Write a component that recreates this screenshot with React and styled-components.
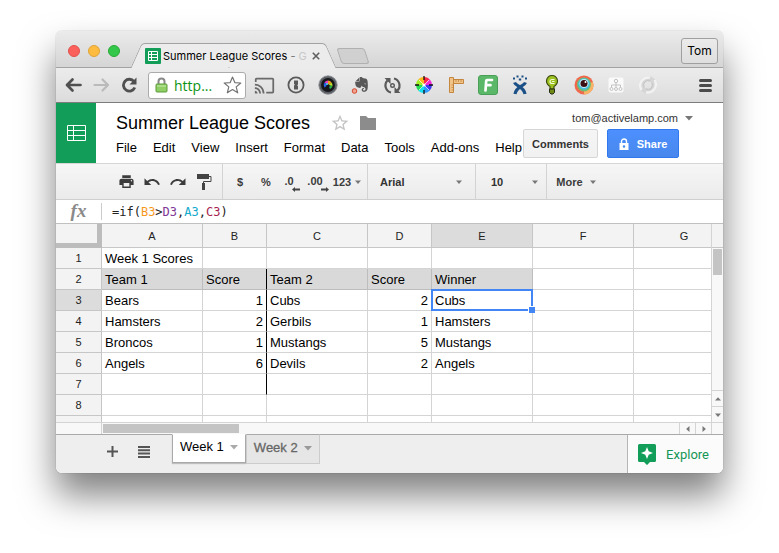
import React from "react";
import styled, { createGlobalStyle, css } from "styled-components";
import { MdCast, MdPrint, MdUndo, MdRedo, MdStarBorder } from "react-icons/md";
import { FaEvernote } from "react-icons/fa";

const GlobalStyle = createGlobalStyle`
  *, *::before, *::after { box-sizing: border-box; }
  body {
    margin: 0;
    background: #fff;
    color: #000;
    font-family: Arial, "Liberation Sans", sans-serif;
    font-size: 13px;
  }
  button, input, select { font: inherit; color: inherit; margin: 0; padding: 0; border: 0; background: none; border-radius: 0; }
  svg { display: block; flex: none; }
`;

const Desktop = styled.main`
  padding: 31px 56px 80px;
`;

const Window = styled.div`
  display: flex;
  flex-direction: column;
  border-radius: 6px;
  overflow: hidden;
  background: #fff;
`;

const WindowShadow = styled.div`
  border-radius: 6px;
  box-shadow: 0 0 1px rgba(0, 0, 0, 0.5), 0 22px 36px rgba(0, 0, 0, 0.5);
`;

/* ---------- Browser chrome ---------- */

const TabStrip = styled.header`
  display: flex;
  align-items: flex-end;
  height: 37px;
  padding: 0 5px 0 12px;
  background: linear-gradient(#ebebeb, #d5d5d5);
  border-bottom: 1px solid #a2a2a2;
`;

const Lights = styled.div`
  display: flex;
  gap: 8px;
  align-self: center;
  margin: 3px 10px 0 0;
`;

const Light = styled.button`
  width: 12px;
  height: 12px;
  border-radius: 50%;
  background: ${(p) => p.$fill};
  border: 1px solid ${(p) => p.$edge};
`;

const BrowserTab = styled.div`
  position: relative;
  z-index: 0;
  display: flex;
  align-items: center;
  height: 25px;
  width: 195px;
  margin: 0 6px -1px;
  padding: 1px 8px 0 9px;
  gap: 2px;
  font: 11px/24px Inter, sans-serif;

  &::before,
  &::after {
    content: "";
    position: absolute;
    z-index: -1;
    top: 0;
    bottom: 0;
    background: #ececec;
    border-top: 1px solid #a2a2a2;
  }
  &::before {
    left: 0;
    right: 50%;
    transform: skewX(-24deg);
    border-left: 1px solid #a2a2a2;
    border-top-left-radius: 4px;
  }
  &::after {
    left: 45%;
    right: 0;
    transform: skewX(24deg);
    border-right: 1px solid #a2a2a2;
    border-top-right-radius: 4px;
  }
`;

const TabTitle = styled.span`
  flex: 1;
  white-space: nowrap;
`;

const Faded = styled.span`
  color: ${(p) => (p.$strong ? "#c8c8c8" : "#777")};
`;

const CloseTab = styled.button`
  display: grid;
  place-items: center;
  width: 14px;
  height: 14px;
`;

const NewTab = styled.button`
  width: 28px;
  height: 16px;
  margin: 0 auto 3px 2px;
  transform: skewX(18deg);
  border: 1px solid #b0b0b0;
  border-radius: 3px;
  background: #d0d0d0;
`;

const Profile = styled.button`
  align-self: center;
  width: 37px;
  height: 26px;
  margin-top: 3px;
  border: 1px solid #a0a0a0;
  border-radius: 3px;
  background: linear-gradient(#ebebeb, #dedede);
  font: 12px Inter, sans-serif;
`;

const NavBar = styled.nav`
  display: flex;
  align-items: center;
  height: 35px;
  padding: 0 11px 0 3px;
  background: linear-gradient(#ececec, #dcdcdc);
  border-bottom: 1px solid #7c7c7c;
`;

const IconSlot = styled.button`
  display: grid;
  place-items: center;
  flex: none;
  width: ${(p) => p.$w || 28}px;
  height: 28px;
  color: ${(p) => p.$color || "#505050"};
`;

const Omnibox = styled.label`
  display: flex;
  align-items: center;
  gap: 6px;
  flex: none;
  width: 98px;
  height: 27px;
  margin: 0 2px 0 5px;
  padding: 0 3px 0 6px;
  border: 1px solid #ababab;
  border-radius: 3px;
  background: #fff;
`;

const UrlInput = styled.input`
  flex: 1;
  width: 40px;
  min-width: 0;
  color: #0b9312;
  outline: 0;
  font: 14px "Open Sans", sans-serif;
`;

const Extensions = styled.div`
  display: flex;
  margin-right: auto;
`;

/* ---------- Document header ---------- */

const DocHeader = styled.header`
  display: flex;
  height: 60px;
`;

const Brand = styled.a`
  display: grid;
  place-items: center;
  width: 40px;
  background: #129d58;
`;

const DocMain = styled.div`
  flex: 1;
  min-width: 0;
  padding: 7px 0 0 20px;
`;

const TitleRow = styled.div`
  display: flex;
  align-items: center;
  height: 26px;
`;

const DocTitle = styled.h1`
  margin: 0 20px 0 0;
  font-size: 18px;
  font-weight: 400;
  white-space: nowrap;
`;

const StarButton = styled.button`
  color: #c4c4c4;
  margin-right: 10px;
`;

const MenuBar = styled.div`
  display: flex;
  gap: 16px;
  height: 24px;
`;

const MenuItem = styled.button`
  line-height: 22px;
  white-space: nowrap;
`;

const Account = styled.div`
  display: flex;
  flex-direction: column;
  align-items: flex-end;
  padding: 6px 30px 0 0;
`;

const AccountMenu = styled.button`
  display: flex;
  align-items: center;
  gap: 7px;
  height: 18px;
  color: #333;
  font-size: 11px;
`;

const Actions = styled.div`
  display: flex;
  gap: 9px;
  margin: 2px 14px 0 0;
`;

const ActionButton = styled.button`
  display: flex;
  align-items: center;
  justify-content: center;
  gap: 8px;
  height: 29px;
  width: ${(p) => p.$w}px;
  border-radius: 2px;
  font-size: 11px;
  font-weight: 700;
  ${(p) =>
    p.$primary
      ? css`
          color: #fff;
          background: linear-gradient(#4d90fe, #4787ed);
          border: 1px solid #3079ed;
        `
      : css`
          color: #333;
          background: linear-gradient(#f5f5f5, #f1f1f1);
          border: 1px solid #d6d6d6;
        `}
`;

/* ---------- Toolbar ---------- */

const Toolbar = styled.div`
  display: flex;
  height: 37px;
  border-top: 1px solid #d6d6d6;
  border-bottom: 1px solid #cfcfcf;
  background: linear-gradient(#f6f6f6, #ebebeb);
  color: #333;
  font-size: 11px;
  font-weight: 700;
`;

const ToolGroup = styled.div`
  display: flex;
  align-items: center;
  flex: none;
  padding: 0 ${(p) => p.$right || 0}px 0 ${(p) => p.$left || 0}px;
  width: ${(p) => (p.$w ? `${p.$w}px` : "auto")};
  border-right: ${(p) => (p.$last ? 0 : 1)}px solid #d3d3d3;
`;

const Tool = styled.button`
  display: flex;
  align-items: center;
  justify-content: center;
  flex: none;
  gap: ${(p) => p.$gap || 4}px;
  width: ${(p) => p.$w || 26}px;
  height: 26px;
  color: #3c3c3c;
  font-weight: 700;
`;

const Decimals = styled.span`
  display: flex;
  line-height: 13px;

  svg {
    align-self: flex-end;
    margin: 0 0 -4px -2px;
  }
`;

const ToolSelect = styled.select`
  flex: 1;
  width: 40px;
  appearance: none;
  font-weight: 700;
  outline: 0;
`;

/* ---------- Formula bar ---------- */

const FormulaBar = styled.div`
  display: flex;
  align-items: center;
  height: 24px;
  border-bottom: 1px solid #c0c0c0;
`;

const FxLabel = styled.span`
  width: 46px;
  height: 17px;
  border-right: 1px solid #ccc;
  text-align: center;
  color: #8a8a8a;
  font: italic 700 19px/16px "Liberation Serif", serif;
`;

const FormulaText = styled.div`
  flex: 1;
  padding-left: 10px;
  font: 12px/20px "DejaVu Sans Mono", monospace;
  color: #222;
  outline: 0;
`;

const Ref = styled.span`
  color: ${(p) => p.$color};
`;

/* ---------- Grid ---------- */

const GridArea = styled.section`
  display: flex;
  height: 198px;
`;

const GridClip = styled.div`
  flex: 1;
  min-width: 0;
  overflow: hidden;
`;

const Sheet = styled.table`
  width: 679px;
  min-width: 100%;
  table-layout: fixed;
  border-collapse: separate;
  border-spacing: 0;
`;

const Col = styled.col`
  width: ${(p) => (p.$w ? `${p.$w}px` : "auto")};
`;

const HeadCell = styled.th`
  height: ${(p) => (p.$row ? 21 : 24)}px;
  padding: 0;
  font-size: 11px;
  font-weight: 400;
  color: #222;
  text-align: center;
  background: ${(p) => (p.$active ? "#dcdcdc" : "#f3f3f3")};
  border-right: 1px solid #c6c6c6;
  border-bottom: 1px solid #c6c6c6;
`;

const Corner = styled.td`
  background: #f3f3f3;
  border-right: 5px solid #bcbcbc;
  border-bottom: 5px solid #bcbcbc;
`;

const Cell = styled.td`
  position: relative;
  height: 21px;
  padding: 1px 3px 0;
  line-height: 19px;
  white-space: nowrap;
  text-align: ${(p) => (p.$num ? "right" : "left")};
  background: ${(p) => (p.$shade ? "#d9d9d9" : "#fff")};
  border-bottom: 1px solid ${(p) => (p.$shade ? "#bdbdbd" : "#d4d4d4")};
  border-right: 1px solid ${(p) => (p.$divider ? "#000" : p.$shade ? "#bdbdbd" : "#d4d4d4")};
`;

const Selection = styled.span`
  position: absolute;
  z-index: 1;
  inset: -1px;
  border: 2px solid #4285f4;

  &::after {
    content: "";
    position: absolute;
    right: -4px;
    bottom: -4px;
    width: 7px;
    height: 7px;
    background: #4285f4;
    border: solid #fff;
    border-width: 1px 0 0 1px;
  }
`;

const VScroll = styled.div`
  display: flex;
  flex-direction: column;
  width: 12px;
  border-left: 1px solid #d4d4d4;
  background: #f8f8f8;
`;

const VHead = styled.div`
  height: 24px;
  background: #f3f3f3;
  border-bottom: 1px solid #c6c6c6;
`;

const VThumb = styled.div`
  width: 9px;
  height: 26px;
  margin: 1px 1px auto;
  background: #c4c4c4;
`;

const ScrollButton = styled.button`
  display: grid;
  place-items: center;
  ${(p) =>
    p.$vertical
      ? "height: 16px; border-top: 1px solid #d4d4d4;"
      : "width: 16px; border-left: 1px solid #d4d4d4;"}
`;

const HScroll = styled.div`
  display: flex;
  height: 12px;
  border-top: 1px solid #d4d4d4;
  background: #f8f8f8;
`;

const HTrack = styled.div`
  flex: 1;
  margin-left: 45px;
  padding: 1px;
  border-left: 1px solid #d4d4d4;
`;

const HThumb = styled.div`
  width: 136px;
  height: 9px;
  background: #c4c4c4;
`;

const ScrollEnd = styled.div`
  width: 12px;
  border-left: 1px solid #d4d4d4;
`;

/* ---------- Footer ---------- */

const Footer = styled.footer`
  display: flex;
  align-items: flex-start;
  height: 39px;
  padding-left: 40px;
  background: #eee;
  border-top: 1px solid #a9a9a9;
`;

const FootButton = styled.button`
  display: grid;
  place-items: center;
  width: 32px;
  height: 33px;
  color: #555;
`;

const SheetTabs = styled.div`
  display: flex;
  flex: 1;
  margin: -1px 0 0 12px;
`;

const SheetTab = styled.button`
  display: flex;
  align-items: center;
  gap: 6px;
  height: ${(p) => (p.$active ? 29 : 30)}px;
  padding: 0 7px ${(p) => (p.$active ? 4 : 3)}px;
  border: 1px solid ${(p) => (p.$active ? "#a9a9a9" : "#ccc")};
  border-top-color: ${(p) => (p.$active ? "#fff" : "#a9a9a9")};
  background: ${(p) => (p.$active ? "#fff" : "#e6e6e6")};
  color: ${(p) => (p.$active ? "#000" : "#666")};
  box-shadow: ${(p) => (p.$active ? "0 1px 1px rgba(0, 0, 0, 0.2)" : "none")};
  -webkit-text-stroke: ${(p) => (p.$active ? "0" : "0.3px #666")};
`;

const Explore = styled.button`
  display: flex;
  align-items: center;
  gap: 10px;
  align-self: stretch;
  padding: 0 14px 0 10px;
  border-left: 1px solid #b5b5b5;
  background: #fbfbfb;
  color: #159655;
  font: 13px Roboto, sans-serif;
`;

/* ---------- Drawings ---------- */

const Caret = ({ size = 6, fill = "#777", dir = "down" }) => {
  const turn = { down: 0, left: 90, up: 180, right: 270 }[dir];
  return (
    <svg width={size} height={size} viewBox="0 0 8 8" fill={fill} aria-hidden="true">
      <path d="M0 2h8L4 6.500z" transform={`rotate(${turn} 4 4)`} />
    </svg>
  );
};

const Arrow = ({ flip }) => (
  <svg width="17" height="16" viewBox="0 0 17 16" fill="none" stroke="currentColor" strokeWidth={flip ? 2.2 : 2.7} strokeLinecap="round" strokeLinejoin="round">
    <path d="M7.500 2.500 2 8l5.500 5.500M2.500 8H15.500" transform={flip ? "rotate(180 8.500 8)" : undefined} />
  </svg>
);

const Reload = () => (
  <svg width="17" height="16" viewBox="0 0 17 16" fill="none" stroke="currentColor" strokeWidth="2.800">
    <path d="M13 4.500A5.900 5.900 0 1 0 13.800 10.500" />
    <path d="M15.500.5v7h-7z" fill="currentColor" stroke="none" />
  </svg>
);

const SheetLogo = () => (
  <svg width="19" height="16" viewBox="0 0 19 16" fill="none" stroke="#fff">
    <path d="M.5.5h18v15H.5zM6.500.5v15M.5 5.500h18M.5 10.500h18" />
  </svg>
);

const Favicon = () => (
  <svg width="16" height="16" viewBox="0 0 16 16">
    <rect width="16" height="16" rx="1" fill="#129d58" />
    <path d="M3.500 3.500h9v9h-9zM6.500 3.500v9M3.500 6.500h9M3.500 9.500h9" fill="none" stroke="#fff" />
  </svg>
);

const Padlock = () => (
  <svg width="13" height="16" viewBox="0 0 13 16">
    <path d="M3.500 8V4.500a3 3 0 0 1 6 0V8" fill="none" stroke="#8a8a8a" strokeWidth="2" />
    <rect x="1" y="7" width="11" height="8" rx="1" fill="#8fcf65" stroke="#5a9a3a" />
    <path d="M2 9h9" stroke="#c5ecaa" />
  </svg>
);

const BookmarkStar = () => (
  <svg width="19" height="18" viewBox="0 0 19 18" fill="#fff" stroke="#757575" strokeWidth="1.200" strokeLinejoin="round">
    <path d="m9.500 1 2.300 5.600 6 .4-4.600 3.900 1.500 5.900-5.200-3.200-5.200 3.200 1.500-5.900L1.200 7l6-.4z" />
  </svg>
);

const OnePassword = () => (
  <svg width="18" height="18" viewBox="0 0 18 18">
    <circle cx="9" cy="9" r="7.600" fill="none" stroke="#5a5a5a" strokeWidth="1.800" />
    <path d="M7 4.500h4v4l-1 .8 1 .8v3.400H7V9.600l1-.8-1-.8z" fill="#5a5a5a" />
  </svg>
);

const Lens = () => (
  <svg width="20" height="20" viewBox="0 0 20 20">
    <circle cx="10" cy="10" r="9.200" fill="#5c6066" stroke="#8a8d92" strokeWidth=".8" />
    <circle cx="10" cy="10" r="7" fill="#17181c" />
    <path d="M10 10 6.500 7.500A4.500 4.500 0 0 1 10 5.500z" fill="#e038c0" />
    <path d="M10 10V5.500a4.500 4.500 0 0 1 3.500 2z" fill="#f59b1c" />
    <path d="m10 10 3.500-2.500a4.500 4.500 0 0 1 1 3.500z" fill="#c8e02a" />
    <path d="m10 10 4.500 1a4.500 4.500 0 0 1-2.500 3z" fill="#2bb34a" />
    <path d="m10 10-3.500-2.500a4.500 4.500 0 0 0 0 5z" fill="#2a62e8" />
    <circle cx="10" cy="11" r="1.800" fill="#15161f" />
    <circle cx="9" cy="9" r="1" fill="#40e0f0" />
  </svg>
);

const Elephant = () => (
  <svg width="18" height="18" viewBox="0 0 18 18">
    <g transform="translate(2 0)">
      <FaEvernote size={17} color="#585858" />
    </g>
    <circle cx="3.500" cy="15" r="2.300" fill="#f3a08c" stroke="#d4492e" />
  </svg>
);

const SyncArrows = () => (
  <svg width="19" height="19" viewBox="0 0 19 19" fill="none" stroke="#5a5a5a" strokeWidth="2.200">
    <path d="M8 16.500A7.200 7.200 0 0 1 4.500 4.500M11 2.500A7.200 7.200 0 0 1 14.500 14.500" />
    <path d="M1.500 2h6v6zM17.500 17h-6v-6z" fill="#5a5a5a" stroke="none" />
    <circle cx="9.500" cy="9.500" r="1.800" strokeWidth="1.400" />
  </svg>
);

const wedge = (i) => {
  const pt = (a) => `${10 + 8 * Math.cos(a)} ${10 + 8 * Math.sin(a)}`;
  const a = (i * Math.PI) / 4;
  return `M10 10 ${pt(a)}A8 8 0 0 1 ${pt(a + Math.PI / 4)}z`;
};

const ColorWheel = () => (
  <svg width="20" height="20" viewBox="0 0 20 20">
    {["#3a3cf5", "#2b9bff", "#12dff0", "#25dd55", "#a5ef25", "#ffb81c", "#fb2a4a", "#f52ad5"].map((c, i) => (
      <path key={c} d={wedge(i)} fill={c} />
    ))}
    <path d="M10 1v4M10 15v4M1 10h4M15 10h4" stroke="#111" strokeWidth="1.300" />
    <path d="m5 5 10 10M15 5 5 15" stroke="#fff" strokeWidth=".6" />
    <circle cx="10" cy="10" r="1.600" fill="#fff" />
  </svg>
);

const Rulers = () => (
  <svg width="18" height="18" viewBox="0 0 18 18" fill="#f1c48a" stroke="#c4863e">
    <path d="M3.500 3.500h13v4h-13z" />
    <path d="M2.500 1.500h4v15h-4z" />
    <path d="M9 4v2M11.500 4v2M14 4v2M4.500 9h2M4.500 11.500h2M4.500 14h2" strokeWidth=".8" />
  </svg>
);

const FBadge = () => (
  <svg width="20" height="20" viewBox="0 0 20 20">
    <rect x=".5" y=".5" width="19" height="19" rx="2.500" fill="#5bb868" stroke="#499f57" />
    <path d="M7.500 15.500 8.200 6Q8.300 5 9.300 5H14M8 10.200H12.500" fill="none" stroke="#fff" strokeWidth="2.700" strokeLinecap="round" />
  </svg>
);

const Figure = () => (
  <svg width="18" height="20" viewBox="0 0 18 20" fill="none" stroke="#1b5186" strokeWidth="3.200">
    <path d="M3.500 7.500C5 11.500 13 11.500 14 19M14.500 7.500C13 11.500 5 11.500 4 19" />
    <path d="M2 3.500h2M5.500 1.500h2M10.500 1.500h2M14 3.500h2M7.800 4.500h2.400" strokeWidth="2" />
  </svg>
);

const Bulb = () => (
  <svg width="14" height="20" viewBox="0 0 14 20">
    <path d="M5 11.500C2.500 10 1.500 8 1.500 6a5.500 5.500 0 0 1 11 0c0 2-1 4-3.500 5.500V14H5z" fill="#9cc31f" stroke="#3e4a12" strokeWidth="1.200" />
    <path d="M4.500 14h5v3.500L8 19H6l-1.500-1.500z" fill="#6f8a17" stroke="#272b12" />
    <path d="M9.500 4.500H7a1.800 1.800 0 0 0 0 4h2.500M7 6.500h2.500" fill="none" stroke="#f3f8d8" strokeWidth="1.200" />
  </svg>
);

const Eye = () => (
  <svg width="20" height="20" viewBox="0 0 20 20">
    <circle cx="10" cy="10" r="9.500" fill="#f0694c" />
    <path d="M10 19.500A9.500 9.500 0 0 0 19 7L10 10z" fill="#f7b466" />
    <circle cx="10" cy="9.500" r="7" fill="#6fbf73" />
    <circle cx="10" cy="9" r="5.800" fill="#45bde0" />
    <circle cx="10" cy="8.500" r="4.600" fill="#c4ecf3" />
    <circle cx="10" cy="8.500" r="3.500" fill="#3b0f14" />
    <circle cx="11.500" cy="7" r="1" fill="#fff" />
  </svg>
);

const Sitemap = () => (
  <svg width="16" height="16" viewBox="0 0 16 16">
    <rect x=".5" y=".5" width="15" height="15" rx="2" fill="#fafafa" />
    <g fill="none" stroke="#c2c2c2">
      <circle cx="8" cy="4" r="1.700" />
      <circle cx="3.500" cy="12" r="1.500" />
      <circle cx="8" cy="12" r="1.500" />
      <circle cx="12.500" cy="12" r="1.500" />
      <path d="M8 6v4M3.500 10.500V8h9v2.500" />
    </g>
  </svg>
);

const Swirl = () => (
  <svg width="20" height="20" viewBox="0 0 20 20" fill="none" strokeLinecap="round">
    <circle cx="10" cy="10" r="6.500" stroke="#d6d6d6" strokeWidth="5" />
    <path d="M3 14A8 8 0 0 1 11 2.500M17 6A8 8 0 0 1 9 17.500" stroke="#f2f2f2" strokeWidth="2.500" />
    <path d="M6 12a4.500 4.500 0 0 1 6-6M14 8a4.500 4.500 0 0 1-6 6" stroke="#c4c4c4" strokeWidth="1" />
  </svg>
);

const Hamburger = () => (
  <svg width="13" height="13" viewBox="0 0 13 13" stroke="#4b4b4b" strokeWidth="3" strokeLinecap="round">
    <path d="M1.500 1.500h10M1.500 6.500h10M1.500 11.500h10" />
  </svg>
);

const Folder = () => (
  <svg width="16" height="14" viewBox="0 0 16 14" fill="#8c8c8c">
    <path d="M0 0h6l2 2h8v12H0z" />
  </svg>
);

const ShareLock = () => (
  <svg width="10" height="12" viewBox="0 0 10 12">
    <path d="M2.500 6V3.500a2.500 2.500 0 0 1 5 0V6" fill="none" stroke="#fff" strokeWidth="1.400" />
    <path d="M.5 5h9v7h-9z" fill="#fff" />
    <circle cx="5" cy="8.500" r="1.200" fill="#4787ed" />
  </svg>
);

const PaintRoller = () => (
  <svg width="15" height="16" viewBox="0 0 15 16">
    <path d="M0 0h12v5H0zM5 9h3v7H5z" fill="#444" />
    <path d="M12 2.500h2V7.500H6.500V10" fill="none" stroke="#444" />
  </svg>
);

const ShiftArrow = ({ right }) => (
  <svg width="8" height="5" viewBox="0 0 8 5" fill="#444">
    <path d="M0 2.500 3 0v1.500h5v2H3V5z" transform={right ? "rotate(180 4 2.500)" : undefined} />
  </svg>
);

const Plus = () => (
  <svg width="11" height="11" viewBox="0 0 11 11" stroke="#555" strokeWidth="2">
    <path d="M5.500 0v11M0 5.500h11" />
  </svg>
);

const SheetList = () => (
  <svg width="12" height="12" viewBox="0 0 12 12" stroke="#555" strokeWidth="2">
    <path d="M0 1h12M0 4.300h12M0 7.600h12M0 11h12" />
  </svg>
);

const ExploreMark = () => (
  <svg width="18" height="21" viewBox="0 0 18 21">
    <path d="M1.500 0h15A1.500 1.500 0 0 1 18 1.500v15a1.500 1.500 0 0 1-1.500 1.500H12l-3 3-3-3H1.500A1.500 1.500 0 0 1 0 16.500v-15A1.500 1.500 0 0 1 1.500 0z" fill="#129d58" />
    <path d="m9 3 1.700 4.300L15 9l-4.300 1.700L9 15l-1.700-4.300L3 9l4.300-1.700z" fill="#fff" />
  </svg>
);

/* ---------- Data ---------- */

const EXTENSIONS = [
  ["Cast", <MdCast size={21} color="#6a6a6a" />],
  ["Passwords", <OnePassword />],
  ["Lens", <Lens />],
  ["Clip note", <Elephant />],
  ["Sync", <SyncArrows />],
  ["Color wheel", <ColorWheel />],
  ["Rulers", <Rulers />],
  ["F", <FBadge />],
  ["Issues", <Figure />],
  ["Bulb", <Bulb />],
  ["Eye", <Eye />],
  ["Sitemap", <Sitemap />],
  ["Swirl", <Swirl />],
];

const MENUS = ["File", "Edit", "View", "Insert", "Format", "Data", "Tools", "Add-ons", "Help"];
const COLUMNS = ["A", "B", "C", "D", "E", "F", "G"];
const WIDTHS = [46, 101, 64, 101, 64, 101, 101, 101];
const ROWS = [
  ["Week 1 Scores"],
  ["Team 1", "Score", "Team 2", "Score", "Winner"],
  ["Bears", 1, "Cubs", 2, "Cubs"],
  ["Hamsters", 2, "Gerbils", 1, "Hamsters"],
  ["Broncos", 1, "Mustangs", 5, "Mustangs"],
  ["Angels", 6, "Devils", 2, "Angels"],
  [],
  [],
  [],
];
const SELECTED = { row: 2, col: 4 };

const Chrome = () => (
  <>
    <TabStrip>
      <Lights>
        <Light aria-label="Close" $fill="#fc605b" $edge="#e0504c" />
        <Light aria-label="Minimize" $fill="#fdbc40" $edge="#dfa236" />
        <Light aria-label="Zoom" $fill="#34c84a" $edge="#27aa35" />
      </Lights>
      <BrowserTab>
        <Favicon />
        <TabTitle>
          Summer League Scores <Faded>-</Faded> <Faded $strong>G</Faded>
        </TabTitle>
        <CloseTab aria-label="Close tab">
          <svg width="8" height="8" viewBox="0 0 8 8" stroke="#5f5f5f" strokeWidth="1.600">
            <path d="m.8.8 6.400 6.400M7.200.8.8 7.200" />
          </svg>
        </CloseTab>
      </BrowserTab>
      <NewTab aria-label="New tab" />
      <Profile>Tom</Profile>
    </TabStrip>
    <NavBar>
      <IconSlot aria-label="Back"><Arrow /></IconSlot>
      <IconSlot aria-label="Forward" $color="#bababa"><Arrow flip /></IconSlot>
      <IconSlot aria-label="Reload"><Reload /></IconSlot>
      <Omnibox>
        <Padlock />
        <UrlInput aria-label="Address" defaultValue="http..." />
        <BookmarkStar />
      </Omnibox>
      <Extensions>
        {EXTENSIONS.map(([name, icon]) => (
          <IconSlot key={name} $w={32} aria-label={name}>{icon}</IconSlot>
        ))}
      </Extensions>
      <IconSlot $w={13} aria-label="Menu"><Hamburger /></IconSlot>
    </NavBar>
  </>
);

const Header = () => (
  <DocHeader>
    <Brand href="#" aria-label="Sheets home"><SheetLogo /></Brand>
    <DocMain>
      <TitleRow>
        <DocTitle>Summer League Scores</DocTitle>
        <StarButton aria-label="Star"><MdStarBorder size={20} /></StarButton>
        <button aria-label="Move to folder"><Folder /></button>
      </TitleRow>
      <MenuBar>
        {MENUS.map((m) => <MenuItem key={m}>{m}</MenuItem>)}
      </MenuBar>
    </DocMain>
    <Account>
      <AccountMenu>tom@activelamp.com <Caret size={8} /></AccountMenu>
      <Actions>
        <ActionButton $w={75}>Comments</ActionButton>
        <ActionButton $w={72} $primary><ShareLock />Share</ActionButton>
      </Actions>
    </Account>
  </DocHeader>
);

const Tools = () => (
  <Toolbar>
    <ToolGroup $left={57} $right={5}>
      <Tool aria-label="Print"><MdPrint size={17} /></Tool>
      <Tool aria-label="Undo"><MdUndo size={18} /></Tool>
      <Tool aria-label="Redo"><MdRedo size={18} /></Tool>
      <Tool aria-label="Paint format"><PaintRoller /></Tool>
    </ToolGroup>
    <ToolGroup $left={4} $right={4}>
      <Tool>$</Tool>
      <Tool>%</Tool>
      <Tool aria-label="Decrease decimal places"><Decimals>.0<ShiftArrow /></Decimals></Tool>
      <Tool aria-label="Increase decimal places"><Decimals>.00<ShiftArrow right /></Decimals></Tool>
      <Tool $w={32}>123 <Caret /></Tool>
    </ToolGroup>
    <ToolGroup $left={12} $right={13} $w={108}>
      <ToolSelect aria-label="Font" defaultValue="Arial"><option>Arial</option></ToolSelect>
      <Caret />
    </ToolGroup>
    <ToolGroup $left={15} $right={8} $w={71}>
      <ToolSelect aria-label="Font size" defaultValue="10"><option>10</option></ToolSelect>
      <Caret />
    </ToolGroup>
    <ToolGroup $left={7} $last>
      <Tool $w={44} $gap={7}>More <Caret /></Tool>
    </ToolGroup>
  </Toolbar>
);

const Grid = () => (
  <GridArea>
    <GridClip>
      <Sheet>
        <colgroup>{WIDTHS.map((w, i) => <Col key={i} $w={w} />)}</colgroup>
        <thead>
          <tr>
            <Corner />
            {COLUMNS.map((c, i) => (
              <HeadCell key={c} scope="col" $active={i === SELECTED.col}>{c}</HeadCell>
            ))}
          </tr>
        </thead>
        <tbody>
          {ROWS.map((row, r) => (
            <tr key={r}>
              <HeadCell scope="row" $row $active={r === SELECTED.row}>{r < 8 ? r + 1 : ""}</HeadCell>
              {COLUMNS.map((c, i) => (
                <Cell
                  key={c}
                  $num={typeof row[i] === "number"}
                  $shade={r === 1 && i < 5}
                  $divider={c === "B" && r >= 1 && r <= 6}
                >
                  {row[i]}
                  {r === SELECTED.row && i === SELECTED.col && <Selection />}
                </Cell>
              ))}
            </tr>
          ))}
        </tbody>
      </Sheet>
    </GridClip>
    <VScroll>
      <VHead />
      <VThumb />
      <ScrollButton $vertical aria-label="Scroll up"><Caret dir="up" /></ScrollButton>
      <ScrollButton $vertical aria-label="Scroll down"><Caret /></ScrollButton>
    </VScroll>
  </GridArea>
);

export default function App() {
  return (
    <>
      <GlobalStyle />
      <Desktop>
        <WindowShadow>
          <Window>
            <Chrome />
            <Header />
            <Tools />
            <FormulaBar>
              <FxLabel>fx</FxLabel>
              <FormulaText role="textbox" aria-label="Formula">
                =if(<Ref $color="#f7981d">B3</Ref>&gt;<Ref $color="#7e3794">D3</Ref>,
                <Ref $color="#11a9cc">A3</Ref>,<Ref $color="#a61d4c">C3</Ref>)
              </FormulaText>
            </FormulaBar>
            <Grid />
            <HScroll>
              <HTrack><HThumb /></HTrack>
              <ScrollButton aria-label="Scroll left"><Caret dir="left" /></ScrollButton>
              <ScrollButton aria-label="Scroll right"><Caret dir="right" /></ScrollButton>
              <ScrollEnd />
            </HScroll>
            <Footer>
              <FootButton aria-label="Add sheet"><Plus /></FootButton>
              <FootButton aria-label="All sheets"><SheetList /></FootButton>
              <SheetTabs>
                <SheetTab $active>Week 1 <Caret size={8} fill="#aaa" /></SheetTab>
                <SheetTab>Week 2 <Caret size={8} fill="#999" /></SheetTab>
              </SheetTabs>
              <Explore><ExploreMark />Explore</Explore>
            </Footer>
          </Window>
        </WindowShadow>
      </Desktop>
    </>
  );
}
